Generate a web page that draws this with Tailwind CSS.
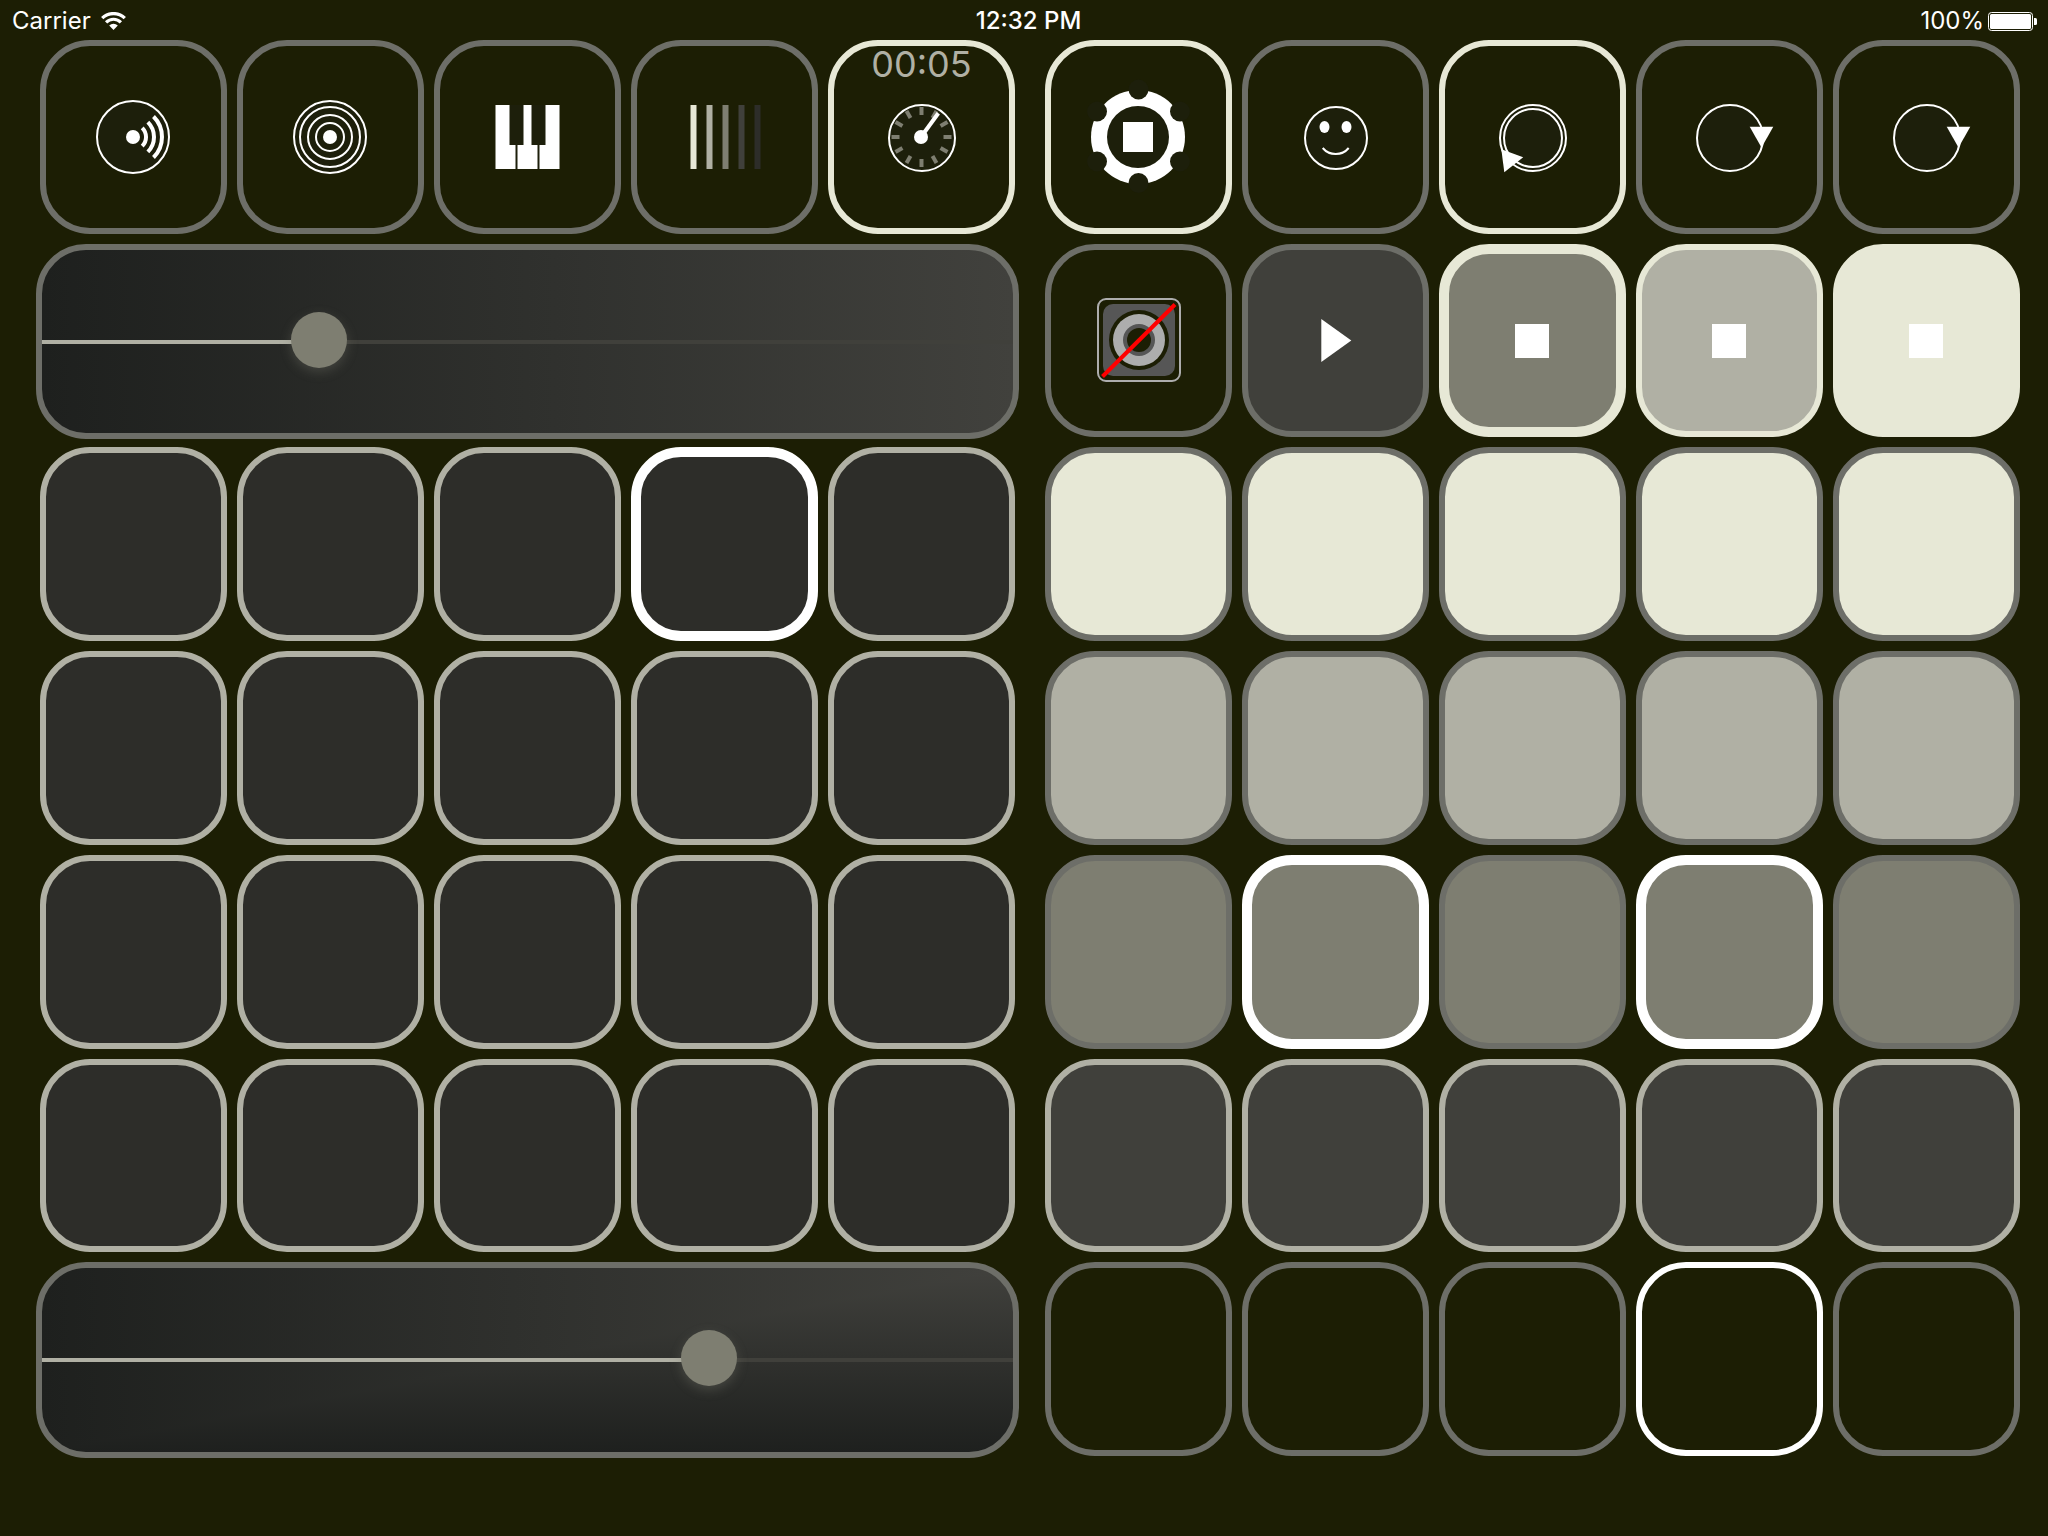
<!DOCTYPE html>
<html lang="en">
<head>
<meta charset="utf-8">
<meta name="viewport" content="width=device-width, initial-scale=1">
<title>Pads</title>
<script src="https://cdn.jsdelivr.net/npm/@tailwindcss/browser@4"></script>
</head>
<body class="flex min-h-screen flex-col bg-[#1c1e04] font-[Inter,sans-serif] text-white">

<!-- Status bar -->
<header class="grid h-10 grid-cols-3 items-center pt-0.5 pr-[11px] pl-3 text-2xl">
  <div class="flex items-center gap-[10px]">
    <span>Carrier</span>
    <svg class="h-[18px] w-[25px]" viewBox="0 0 25 18" fill="none" stroke="#fff" stroke-width="3.2" aria-hidden="true">
      <path d="M1.2 6.2A16 16 0 0 1 23.8 6.2"/>
      <path d="M5.1 10.3A10.5 10.5 0 0 1 19.9 10.3"/>
      <path d="M12.5 18L8.2 13.6A6.1 6.1 0 0 1 16.800 13.6Z" fill="#fff" stroke="none"/>
    </svg>
  </div>
  <time class="pl-2 text-center font-medium">12:32 PM</time>
  <div class="flex items-center justify-end gap-1">
    <span>100%</span>
    <svg class="h-[19px] w-[49px]" viewBox="0 0 49 19" aria-hidden="true">
      <rect x=".5" y=".5" width="44" height="18" rx="3" fill="none" stroke="#fff"/>
      <rect x="2" y="2" width="41" height="15" rx="1.500" fill="#fff"/>
      <path d="M46 6h1.500a1.500 1.500 0 0 1 1.500 1.500v4a1.500 1.500 0 0 1-1.500 1.500H46z" fill="#fff"/>
    </svg>
  </div>
</header>

<main class="grid flex-1 grid-cols-2 gap-[30px] pr-7 pb-20 pl-10">

  <!-- Left half -->
  <section class="grid grid-cols-5 grid-rows-7 gap-[10px] *:rounded-[50px]" aria-label="Instrument">
    <button class="grid place-items-center border-6 border-[#6d6e68]" aria-label="Directional sound">
      <svg class="h-[100px] w-[101px]" viewBox="0 0 101 100" fill="none" stroke="#fff">
        <circle cx="50" cy="50" r="36" fill="#1d1f0b" stroke-width="2"/>
        <circle cx="50" cy="50" r="7" fill="#fff" stroke="none"/>
        <g stroke-width="4">
          <path d="M59.200 40.800A13 13 0 0 1 59.200 59.200"/>
          <path d="M64.850 35.150A21 21 0 0 1 64.850 64.850"/>
          <path d="M70.500 29.500A29 29 0 0 1 70.500 70.500"/>
        </g>
      </svg>
    </button>
    <button class="grid place-items-center border-6 border-[#6d6e68]" aria-label="Surround sound">
      <svg class="h-[100px] w-[101px]" viewBox="0 0 101 100" fill="none" stroke="#fff" stroke-width="2">
        <circle cx="50" cy="50" r="36" fill="#1d1f0b"/>
        <circle cx="50" cy="50" r="30"/>
        <circle cx="50" cy="50" r="22"/>
        <circle cx="50" cy="50" r="14"/>
        <circle cx="50" cy="50" r="7" fill="#fff" stroke="none"/>
      </svg>
    </button>
    <button class="grid place-items-center border-6 border-[#6d6e68]" aria-label="Keyboard">
      <svg class="h-[100px] w-[101px]" viewBox="0 0 101 100" fill="#1d1f0b">
        <rect x="18.500" y="18" width="64" height="64" fill="#fff"/>
        <rect x="32.500" y="18" width="14" height="40"/>
        <rect x="54.500" y="18" width="14" height="40"/>
        <rect x="38.500" y="58" width="2" height="24"/>
        <rect x="60.500" y="58" width="2" height="24"/>
      </svg>
    </button>
    <button class="grid place-items-center border-6 border-[#6d6e68]" aria-label="Shades">
      <svg class="h-[100px] w-[101px]" viewBox="0 0 101 100">
        <rect x="16.500" y="18" width="6" height="64" fill="#e7e8d6"/>
        <rect x="32.500" y="18" width="6" height="64" fill="#b0b0a4"/>
        <rect x="48.500" y="18" width="6" height="64" fill="#7e7e71"/>
        <rect x="64.500" y="18" width="6" height="64" fill="#40403b"/>
        <rect x="80.500" y="18" width="6" height="64" fill="#2d2d29"/>
      </svg>
    </button>
    <button class="relative grid place-items-center border-6 border-[#e7e8d6]" aria-label="Timer">
      <span class="absolute inset-x-0 top-0 text-center text-[36px] leading-9 text-[#b0b0a4]">00:05</span>
      <svg class="h-[100px] w-[101px]" viewBox="0 0 101 100" stroke="#7e7e71" stroke-width="4">
        <circle cx="51" cy="51" r="33" fill="#1d1f0b" stroke="#fff" stroke-width="2"/>
        <path d="M50.500 20v8"/>
        <path d="M50.500 20v8" transform="rotate(30 50.500 50)"/>
        <path d="M50.500 20v8" transform="rotate(60 50.500 50)"/>
        <path d="M50.500 20v8" transform="rotate(90 50.500 50)"/>
        <path d="M50.500 20v8" transform="rotate(120 50.500 50)"/>
        <path d="M50.500 20v8" transform="rotate(150 50.500 50)"/>
        <path d="M50.500 20v8" transform="rotate(180 50.500 50)"/>
        <path d="M50.500 20v8" transform="rotate(210 50.500 50)"/>
        <path d="M50.500 20v8" transform="rotate(240 50.500 50)"/>
        <path d="M50.500 20v8" transform="rotate(270 50.500 50)"/>
        <path d="M50.500 20v8" transform="rotate(300 50.500 50)"/>
        <path d="M50.500 20v8" transform="rotate(330 50.500 50)"/>
        <path d="M50 50L67.300 26.300" stroke="#fff"/>
        <circle cx="50" cy="50" r="7" fill="#fff" stroke="none"/>
      </svg>
    </button>

    <div class="col-span-5 -mx-1 -mb-0.5 overflow-hidden border-6 border-[#6d6e68] bg-linear-to-r from-[#1e201e] to-[#41413d]">
      <input type="range" min="0" max="1000" value="272" aria-label="Volume" style="--v:30%" class="block size-full appearance-none bg-[linear-gradient(to_right,#b0b0a4_var(--v),#40403b_var(--v))] bg-[length:100%_4px] bg-center bg-no-repeat [&::-webkit-slider-thumb]:size-14 [&::-webkit-slider-thumb]:-translate-y-0.5 [&::-webkit-slider-thumb]:appearance-none [&::-webkit-slider-thumb]:rounded-full [&::-webkit-slider-thumb]:bg-[#7e7e71] [&::-webkit-slider-thumb]:shadow-[0_4px_12px_#7e7e7155]">
    </div>

    <button class="border-6 border-[#b0b0a4] bg-[#2d2d29]" aria-label="Pad 1"></button>
    <button class="border-6 border-[#b0b0a4] bg-[#2d2d29]" aria-label="Pad 2"></button>
    <button class="border-6 border-[#b0b0a4] bg-[#2d2d29]" aria-label="Pad 3"></button>
    <button class="border-10 border-white bg-[#2d2d29]" aria-label="Pad 4" aria-pressed="true"></button>
    <button class="border-6 border-[#b0b0a4] bg-[#2d2d29]" aria-label="Pad 5"></button>

    <button class="border-6 border-[#b0b0a4] bg-[#2d2d29]" aria-label="Pad 6"></button>
    <button class="border-6 border-[#b0b0a4] bg-[#2d2d29]" aria-label="Pad 7"></button>
    <button class="border-6 border-[#b0b0a4] bg-[#2d2d29]" aria-label="Pad 8"></button>
    <button class="border-6 border-[#b0b0a4] bg-[#2d2d29]" aria-label="Pad 9"></button>
    <button class="border-6 border-[#b0b0a4] bg-[#2d2d29]" aria-label="Pad 10"></button>

    <button class="border-6 border-[#b0b0a4] bg-[#2d2d29]" aria-label="Pad 11"></button>
    <button class="border-6 border-[#b0b0a4] bg-[#2d2d29]" aria-label="Pad 12"></button>
    <button class="border-6 border-[#b0b0a4] bg-[#2d2d29]" aria-label="Pad 13"></button>
    <button class="border-6 border-[#b0b0a4] bg-[#2d2d29]" aria-label="Pad 14"></button>
    <button class="border-6 border-[#b0b0a4] bg-[#2d2d29]" aria-label="Pad 15"></button>

    <button class="border-6 border-[#b0b0a4] bg-[#2d2d29]" aria-label="Pad 16"></button>
    <button class="border-6 border-[#b0b0a4] bg-[#2d2d29]" aria-label="Pad 17"></button>
    <button class="border-6 border-[#b0b0a4] bg-[#2d2d29]" aria-label="Pad 18"></button>
    <button class="border-6 border-[#b0b0a4] bg-[#2d2d29]" aria-label="Pad 19"></button>
    <button class="border-6 border-[#b0b0a4] bg-[#2d2d29]" aria-label="Pad 20"></button>

    <div class="col-span-5 -mx-1 -mb-0.5 overflow-hidden border-6 border-[#6d6e68] bg-[linear-gradient(to_bottom,#41413d,#1e201e),linear-gradient(to_right,#1e201e,#41413d)] bg-blend-darken">
      <input type="range" min="0" max="1000" value="698" aria-label="Speed" style="--v:69%" class="block size-full appearance-none bg-[linear-gradient(to_right,#b0b0a4_var(--v),#40403b_var(--v))] bg-[length:100%_4px] bg-center bg-no-repeat [&::-webkit-slider-thumb]:size-14 [&::-webkit-slider-thumb]:-translate-y-0.5 [&::-webkit-slider-thumb]:appearance-none [&::-webkit-slider-thumb]:rounded-full [&::-webkit-slider-thumb]:bg-[#7e7e71] [&::-webkit-slider-thumb]:shadow-[0_4px_12px_#7e7e7155]">
    </div>
  </section>

  <!-- Right half -->
  <section class="grid grid-cols-5 grid-rows-7 gap-[10px] *:rounded-[50px]" aria-label="Loops">
    <button class="grid place-items-center border-6 border-[#e7e8d6]" aria-label="Settings">
      <svg class="h-[100px] w-[101px] overflow-visible" viewBox="0 0 101 100" fill="#1d1f0b">
        <circle cx="50" cy="50" r="47" fill="#fff"/>
        <circle cx="50" cy="50" r="31"/>
        <circle cx="50.500" cy="2.500" r="10"/>
        <circle cx="92" cy="24.500" r="10"/>
        <circle cx="92" cy="74.500" r="10"/>
        <circle cx="50.500" cy="96" r="10"/>
        <circle cx="9" cy="74.500" r="10"/>
        <circle cx="9" cy="24.500" r="10"/>
        <rect x="35" y="35" width="30" height="30" fill="#fff"/>
      </svg>
    </button>
    <button class="grid place-items-center border-6 border-[#6d6e68]" aria-label="Smiley">
      <svg class="h-[100px] w-[101px]" viewBox="0 0 101 100" fill="none" stroke="#fff" stroke-width="2">
        <circle cx="51" cy="51" r="31" fill="#1d1f0b"/>
        <ellipse cx="39.500" cy="40" rx="5" ry="6" fill="#fff" stroke="none"/>
        <ellipse cx="61.500" cy="40" rx="5" ry="6" fill="#fff" stroke="none"/>
        <path d="M37.700 61A17 17 0 0 0 63.700 61"/>
      </svg>
    </button>
    <button class="grid place-items-center border-6 border-[#e7e8d6]" aria-label="Double loop">
      <svg class="h-[100px] w-[101px]" viewBox="0 0 101 100" fill="none" stroke="#fff" stroke-width="2">
        <circle cx="51" cy="51" r="33" fill="#1d1f0b"/>
        <circle cx="51" cy="51" r="29"/>
        <path d="M19.300 62.300L41.200 70.300L22.300 85.300Z" fill="#fff" stroke="none"/>
      </svg>
    </button>
    <button class="grid place-items-center border-6 border-[#6d6e68]" aria-label="Loop A">
      <svg class="h-[100px] w-[101px]" viewBox="0 0 101 100">
        <circle cx="51" cy="51" r="33" fill="#1d1f0b" stroke="#fff" stroke-width="2"/>
        <path d="M70.700 39.700H94.300L82.500 60.500Z" fill="#fff"/>
      </svg>
    </button>
    <button class="grid place-items-center border-6 border-[#6d6e68]" aria-label="Loop B">
      <svg class="h-[100px] w-[101px]" viewBox="0 0 101 100">
        <circle cx="51" cy="51" r="33" fill="#1d1f0b" stroke="#fff" stroke-width="2"/>
        <path d="M70.700 39.700H94.300L82.500 60.500Z" fill="#fff"/>
      </svg>
    </button>

    <button class="grid place-items-center border-6 border-[#6d6e68]" aria-label="Speaker off">
      <svg class="h-[100px] w-[101px]" viewBox="0 0 101 100">
        <rect x="10" y="8" width="82" height="82" rx="8" fill="none" stroke="#adadad" stroke-width="2"/>
        <rect x="15" y="13" width="72" height="72" rx="10" fill="#565656"/>
        <circle cx="51" cy="49" r="30" fill="#1c1e04"/>
        <circle cx="51" cy="49" r="26" fill="#adadad"/>
        <circle cx="51" cy="49" r="16" fill="#565656"/>
        <circle cx="51" cy="49" r="12" fill="#1c1e04"/>
        <path d="M14.500 85.500L87 13.500" stroke="#f00" stroke-width="4"/>
      </svg>
    </button>
    <button class="grid place-items-center border-6 border-[#6d6e68] bg-[#40403b]" aria-label="Play">
      <svg class="h-[100px] w-[101px]" viewBox="0 0 101 100" fill="#fff"><path d="M36.300 28L66.300 49.500L36.300 71Z"/></svg>
    </button>
    <button class="grid place-items-center border-10 border-[#e7e8d6] bg-[#7e7e71]" aria-label="Stop 1">
      <svg class="h-[100px] w-[101px]" viewBox="0 0 101 100" fill="#fff"><rect x="33" y="33" width="34" height="34"/></svg>
    </button>
    <button class="grid place-items-center border-6 border-[#e7e8d6] bg-[#b0b0a4]" aria-label="Stop 2">
      <svg class="h-[100px] w-[101px]" viewBox="0 0 101 100" fill="#fff"><rect x="33" y="33" width="34" height="34"/></svg>
    </button>
    <button class="grid place-items-center border-6 border-[#e7e8d6] bg-[#e7e8d6]" aria-label="Stop 3">
      <svg class="h-[100px] w-[101px]" viewBox="0 0 101 100" fill="#fff"><rect x="33" y="33" width="34" height="34"/></svg>
    </button>

    <button class="border-6 border-[#6d6e68] bg-[#e7e8d6]" aria-label="Slot 1"></button>
    <button class="border-6 border-[#6d6e68] bg-[#e7e8d6]" aria-label="Slot 2"></button>
    <button class="border-6 border-[#6d6e68] bg-[#e7e8d6]" aria-label="Slot 3"></button>
    <button class="border-6 border-[#6d6e68] bg-[#e7e8d6]" aria-label="Slot 4"></button>
    <button class="border-6 border-[#6d6e68] bg-[#e7e8d6]" aria-label="Slot 5"></button>

    <button class="border-6 border-[#6d6e68] bg-[#b0b0a4]" aria-label="Slot 6"></button>
    <button class="border-6 border-[#6d6e68] bg-[#b0b0a4]" aria-label="Slot 7"></button>
    <button class="border-6 border-[#6d6e68] bg-[#b0b0a4]" aria-label="Slot 8"></button>
    <button class="border-6 border-[#6d6e68] bg-[#b0b0a4]" aria-label="Slot 9"></button>
    <button class="border-6 border-[#6d6e68] bg-[#b0b0a4]" aria-label="Slot 10"></button>

    <button class="border-6 border-[#6d6e68] bg-[#7e7e71]" aria-label="Slot 11"></button>
    <button class="border-10 border-white bg-[#7e7e71]" aria-label="Slot 12" aria-pressed="true"></button>
    <button class="border-6 border-[#6d6e68] bg-[#7e7e71]" aria-label="Slot 13"></button>
    <button class="border-10 border-white bg-[#7e7e71]" aria-label="Slot 14" aria-pressed="true"></button>
    <button class="border-6 border-[#6d6e68] bg-[#7e7e71]" aria-label="Slot 15"></button>

    <button class="border-6 border-[#b0b0a4] bg-[#40403b]" aria-label="Slot 16"></button>
    <button class="border-6 border-[#b0b0a4] bg-[#40403b]" aria-label="Slot 17"></button>
    <button class="border-6 border-[#b0b0a4] bg-[#40403b]" aria-label="Slot 18"></button>
    <button class="border-6 border-[#b0b0a4] bg-[#40403b]" aria-label="Slot 19"></button>
    <button class="border-6 border-[#b0b0a4] bg-[#40403b]" aria-label="Slot 20"></button>

    <button class="border-6 border-[#6d6e68]" aria-label="Slot 21"></button>
    <button class="border-6 border-[#6d6e68]" aria-label="Slot 22"></button>
    <button class="border-6 border-[#6d6e68]" aria-label="Slot 23"></button>
    <button class="border-6 border-white" aria-label="Slot 24" aria-pressed="true"></button>
    <button class="border-6 border-[#6d6e68]" aria-label="Slot 25"></button>
  </section>
</main>
</body>
</html>
